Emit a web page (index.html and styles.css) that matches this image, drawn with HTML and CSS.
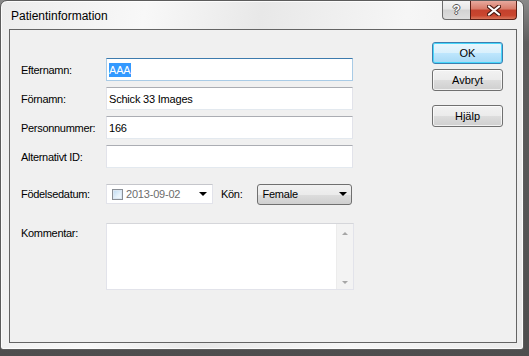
FILE: index.html
```html
<!DOCTYPE html>
<html lang="sv">
<head>
    <meta charset="UTF-8">
    <title>Patientinformation</title>
    <link rel="stylesheet" href="styles.css">
</head>
<body>
    <div class="window">
        <div class="titlebar">
            <span class="title">Patientinformation</span>
            <div class="caption-buttons">
                <div class="cap-btn help">?</div>
                <div class="cap-btn close">
                    <svg width="14" height="11" viewBox="0 0 14 11">
                        <path d="M2 1.5 L12 9.5 M12 1.5 L2 9.5" stroke="#4a1a12" stroke-width="4.2" stroke-linecap="round"/>
                        <path d="M2 1.5 L12 9.5 M12 1.5 L2 9.5" stroke="#ffffff" stroke-width="2.2" stroke-linecap="round"/>
                    </svg>
                </div>
            </div>
        </div>

        <div class="client">
            <div class="form">
                <div class="row">
                    <span class="label">Efternamn:</span>
                    <div class="field focused"><span class="selected">AAA</span></div>
                </div>
                <div class="row">
                    <span class="label">Förnamn:</span>
                    <div class="field">Schick 33 Images</div>
                </div>
                <div class="row">
                    <span class="label">Personnummer:</span>
                    <div class="field">166</div>
                </div>
                <div class="row">
                    <span class="label">Alternativt ID:</span>
                    <div class="field"></div>
                </div>

                <div class="row date-row">
                    <span class="label">Födelsedatum:</span>
                    <div class="datepicker">
                        <span class="checkbox"></span>
                        <span class="date-text">2013-09-02</span>
                        <span class="arrow"></span>
                    </div>
                    <span class="label kon">Kön:</span>
                    <div class="combo">
                        <span>Female</span>
                        <span class="arrow"></span>
                    </div>
                </div>

                <div class="row comment-row">
                    <span class="label">Kommentar:</span>
                    <div class="memo">
                        <div class="memo-text"></div>
                        <div class="scrollbar">
                            <span class="scroll-up"></span>
                            <span class="scroll-down"></span>
                        </div>
                    </div>
                </div>
            </div>

            <div class="buttons">
                <div class="btn default">OK</div>
                <div class="btn">Avbryt</div>
                <div class="btn help-btn">Hjälp</div>
            </div>
        </div>
    </div>
</body>
</html>
```

FILE: styles.css
```css
body {
    margin: 0;
    width: 529px;
    height: 356px;
    background: linear-gradient(180deg, #8a8a8a 0%, #5e5e5e 12%, #4e4e4e 100%);
    font-family: "Liberation Sans", Arial, sans-serif;
    overflow: hidden;
}
.window {
    box-sizing: border-box;
    width: 524px;
    height: 350px;
    border: 1px solid #5c5c5c;
    border-radius: 7px 7px 3px 3px;
    padding: 0 6px 6px 8px;
    background: linear-gradient(100deg, #ececec 0%, #f8f8f8 25%, #e8e8e8 45%, #f6f6f6 70%, #ebebeb 100%);
    box-shadow: inset 0 0 0 1px rgba(255, 255, 255, 0.8);
}
.titlebar {
    height: 28px;
    display: flex;
    justify-content: space-between;
    align-items: flex-start;
}
.title {
    margin: 8px 0 0 2px;
    font-size: 12px;
    line-height: 14px;
    color: #000;
}
.caption-buttons {
    display: flex;
}
.cap-btn {
    box-sizing: border-box;
    height: 19px;
    border: 1px solid #6d6d6d;
    border-top: none;
    display: flex;
    align-items: center;
    justify-content: center;
}
.help {
    width: 28px;
    border-right: none;
    border-radius: 0 0 0 4px;
    background: linear-gradient(180deg, #f4f4f4 0%, #e6e6e6 45%, #d2d2d2 50%, #dedede 100%);
    color: #fff;
    font-weight: bold;
    font-size: 12px;
    text-shadow: 1px 0 0 #555, -1px 0 0 #555, 0 1px 0 #555, 0 -1px 0 #555;
}
.close {
    width: 47px;
    border-radius: 0 0 4px 0;
    border-color: #5a1f16;
    background: linear-gradient(180deg, #e7a99e 0%, #d87a68 45%, #c4412d 50%, #c9452e 80%, #d9765c 100%);
}
.client {
    box-sizing: border-box;
    height: 314px;
    border: 1px solid #646464;
    background: #f0f0f0;
    display: flex;
}
.form {
    flex: 1;
    padding: 28px 0 0 11px;
}
.row {
    display: flex;
    align-items: center;
    height: 23px;
    margin-bottom: 6px;
}
.label {
    width: 85px;
    flex: none;
    font-size: 11px;
    letter-spacing: -0.3px;
    color: #000;
}
.field {
    box-sizing: border-box;
    width: 247px;
    height: 23px;
    background: #fff;
    border: 1px solid #e2e3ea;
    border-top-color: #abadb3;
    border-bottom-color: #e3e9ef;
    padding: 0 2px;
    display: flex;
    align-items: center;
    font-size: 11px;
    letter-spacing: -0.2px;
    color: #000;
}
.field.focused {
    border-color: #a9cbe6;
    border-top-color: #3d7bad;
}
.selected {
    background: #3399ff;
    color: #fff;
    line-height: 14px;
    padding: 0 1px 0 0;
}
.date-row {
    margin-top: 16px;
    height: 20px;
}
.datepicker {
    box-sizing: border-box;
    width: 107px;
    height: 20px;
    background: #fff;
    border: 1px solid #e2e3ea;
    border-top-color: #c5c6cb;
    display: flex;
    align-items: center;
    padding-left: 5px;
}
.checkbox {
    box-sizing: border-box;
    width: 11px;
    height: 11px;
    border: 1px solid #8a8f96;
    background: linear-gradient(135deg, #bcd9f1 0%, #e6f2fb 60%, #f6fbfe 100%);
    box-shadow: inset 0 0 0 1px #dbe7f3;
}
.date-text {
    margin-left: 3px;
    font-size: 11px;
    letter-spacing: -0.2px;
    color: #6d6d6d;
    flex: 1;
}
.arrow {
    width: 0;
    height: 0;
    border-left: 4px solid transparent;
    border-right: 4px solid transparent;
    border-top: 4px solid #000;
    margin-right: 5px;
}
.label.kon {
    width: auto;
    margin-left: 8px;
    margin-right: 15px;
}
.combo {
    box-sizing: border-box;
    width: 95px;
    height: 21px;
    border: 1px solid #707070;
    border-radius: 3px;
    background: linear-gradient(180deg, #f2f2f2 0%, #ebebeb 50%, #dddddd 51%, #cfcfcf 100%);
    display: flex;
    align-items: center;
    justify-content: space-between;
    padding-left: 4px;
    font-size: 11px;
    letter-spacing: -0.2px;
    color: #000;
}
.combo .arrow {
    margin-right: 4px;
}
.comment-row {
    margin-top: 19px;
    height: 67px;
    align-items: flex-start;
}
.comment-row .label {
    margin-top: 4px;
}
.memo {
    box-sizing: border-box;
    width: 248px;
    height: 67px;
    background: #fff;
    border: 1px solid #e2e3ea;
    border-top-color: #d5d6da;
    display: flex;
}
.memo-text {
    flex: 1;
}
.scrollbar {
    width: 17px;
    background: #f3f3f3;
    border-left: 1px solid #ececec;
    display: flex;
    flex-direction: column;
    justify-content: space-between;
    align-items: center;
    padding: 8px 0 5px;
    box-sizing: border-box;
}
.scroll-up {
    border-left: 3px solid transparent;
    border-right: 3px solid transparent;
    border-bottom: 3px solid #a6a6a6;
}
.scroll-down {
    border-left: 3px solid transparent;
    border-right: 3px solid transparent;
    border-top: 3px solid #a6a6a6;
}
.buttons {
    width: 71px;
    flex: none;
    padding: 12px 13px 0 0;
    display: flex;
    flex-direction: column;
}
.btn {
    box-sizing: border-box;
    height: 22px;
    margin-bottom: 5px;
    border: 1px solid #707070;
    border-radius: 3px;
    background: linear-gradient(180deg, #f2f2f2 0%, #ebebeb 50%, #dddddd 51%, #cfcfcf 100%);
    box-shadow: inset 0 0 0 1px rgba(255, 255, 255, 0.7);
    display: flex;
    align-items: center;
    justify-content: center;
    font-size: 11px;
    color: #000;
}
.btn.default {
    border-color: #3c7fb1;
    background: linear-gradient(180deg, #eaf6fd 0%, #d9f0fc 50%, #bee6fd 51%, #a7d9f5 100%);
    box-shadow: inset 0 0 0 1px #48d7fb;
}
.btn.help-btn {
    margin-top: 9px;
}
```
